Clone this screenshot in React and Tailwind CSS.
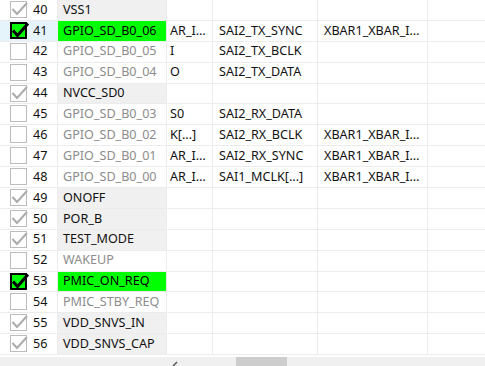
const rows = [
  { n: 40, name: 'VSS1', kind: 'power' },
  { n: 41, name: 'GPIO_SD_B0_06', kind: 'on', hl: true, c: ['AR_I…', 'SAI2_TX_SYNC', 'XBAR1_XBAR_I…'] },
  { n: 42, name: 'GPIO_SD_B0_05', kind: 'off', c: ['I', 'SAI2_TX_BCLK', ''] },
  { n: 43, name: 'GPIO_SD_B0_04', kind: 'off', c: ['O', 'SAI2_TX_DATA', ''] },
  { n: 44, name: 'NVCC_SD0', kind: 'power' },
  { n: 45, name: 'GPIO_SD_B0_03', kind: 'off', c: ['S0', 'SAI2_RX_DATA', ''] },
  { n: 46, name: 'GPIO_SD_B0_02', kind: 'off', c: ['K[...]', 'SAI2_RX_BCLK', 'XBAR1_XBAR_I…'] },
  { n: 47, name: 'GPIO_SD_B0_01', kind: 'off', c: ['AR_I…', 'SAI2_RX_SYNC', 'XBAR1_XBAR_I…'] },
  { n: 48, name: 'GPIO_SD_B0_00', kind: 'off', c: ['AR_I…', 'SAI1_MCLK[...]', 'XBAR1_XBAR_I…'] },
  { n: 49, name: 'ONOFF', kind: 'power' },
  { n: 50, name: 'POR_B', kind: 'power' },
  { n: 51, name: 'TEST_MODE', kind: 'power' },
  { n: 52, name: 'WAKEUP', kind: 'off' },
  { n: 53, name: 'PMIC_ON_REQ', kind: 'on' },
  { n: 54, name: 'PMIC_STBY_REQ', kind: 'off' },
  { n: 55, name: 'VDD_SNVS_IN', kind: 'power' },
  { n: 56, name: 'VDD_SNVS_CAP', kind: 'power' },
];

function Check({ kind }) {
  if (kind === 'on') {
    return (
      <svg width="20" height="18" viewBox="0 0 20 18" className="shrink-0">
        <rect x="1" y="1" width="15" height="15" fill="#00ff00" stroke="#000" strokeWidth="2" />
        <path d="M3 8.5 L7.5 13.5 L18 1.5" fill="none" stroke="#000" strokeWidth="3" />
      </svg>
    );
  }
  return (
    <svg width="20" height="18" viewBox="0 0 20 18" className="shrink-0">
      <rect x="0.5" y="0.5" width="16" height="16" fill="#fff" stroke="#bcbcbc" strokeWidth="1" />
      {kind === 'power' && (
        <path d="M2.5 8 L7 13 L17 2" fill="none" stroke="#ababab" strokeWidth="2" />
      )}
    </svg>
  );
}

function Row({ r }) {
  const nameCls =
    r.kind === 'on'
      ? 'bg-[#00ff00] text-black'
      : r.kind === 'power'
      ? 'bg-[#f0f0f0] text-[#111]'
      : 'bg-white text-[#8c8c8c]';
  const c = r.c || ['', '', ''];
  return (
    <div className="flex h-[21px]">
      <div
        className={`flex items-center w-[58px] shrink-0 pl-[10px] border-r border-b border-[#ececec] ${
          r.hl ? 'bg-[#e5f3fb]' : 'bg-white'
        }`}
      >
        <Check kind={r.kind} />
        <span className="ml-[3px] text-[#111]">{r.n}</span>
      </div>
      <div className={`flex items-center w-[109px] shrink-0 pl-[5px] border-r border-b border-[#ececec] ${nameCls}`}>
        {r.name}
      </div>
      <div className="flex items-center w-[46px] shrink-0 pl-[3px] border-r border-b border-[#ececec] overflow-hidden whitespace-nowrap text-[#111]">
        {c[0]}
      </div>
      <div className="flex items-center w-[105px] shrink-0 pl-[6px] border-r border-b border-[#ececec] text-[#111]">
        {c[1]}
      </div>
      <div className="flex items-center w-[110px] shrink-0 pl-[6px] border-r border-b border-[#ececec] text-[#111]">
        {c[2]}
      </div>
      <div className="flex-1 border-b border-[#ececec]" />
    </div>
  );
}

export default function App() {
  return (
    <div
      className="w-[485px] h-[366px] overflow-hidden bg-white flex flex-col text-[12.6px] leading-none"
      style={{ fontFamily: '"Noto Sans", "Open Sans", sans-serif' }}
    >
      {rows.map((r) => (
        <Row key={r.n} r={r} />
      ))}
      <div className="h-[2px] bg-white" />
      <div className="flex-1 bg-[#f0f0f0] flex items-start">
        <div className="w-[172px]" />
        <svg width="6" height="5" viewBox="0 0 6 5" className="mt-[4px]">
          <path d="M1 5 L5 1" stroke="#555" strokeWidth="1.5" />
        </svg>
        <div className="w-[58px]" />
        <div className="w-[51px] h-full bg-[#cdcdcd]" />
      </div>
    </div>
  );
}
